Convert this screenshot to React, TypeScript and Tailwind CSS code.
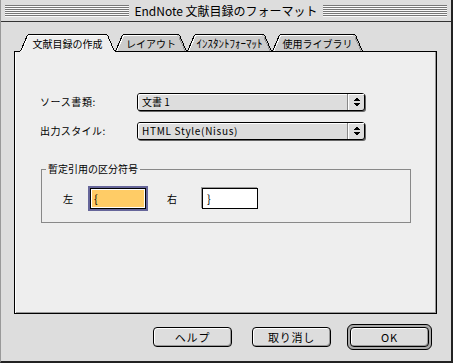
import React from "react";

function TabShape({ w, active }: { w: number; active: boolean }) {
  const fill = active ? "#eeeeee" : "#cccccc";
  const bottom = active ? 18 : 17;
  return (
    <svg className="absolute left-0 top-0" width={w} height={18} viewBox={`0 0 ${w} 18`}>
      <path
        d={`M0 ${bottom} L0 17 L6.8 1.6 Q7.5 0 9.5 0 L${w - 9.5} 0 Q${w - 7.5} 0 ${w - 6.8} 1.6 L${w} 17 L${w} ${bottom} Z`}
        fill={fill}
      />
      <path
        d={`M1.9 17 L8.1 2.6 Q8.6 1.5 9.8 1.5 L${w - 10} 1.5`}
        stroke="#ffffff"
        fill="none"
        shapeRendering="crispEdges"
      />
      {!active && (
        <path
          d={`M${w - 2} 17 L${w - 8.2} 2.6`}
          stroke="#999999"
          fill="none"
          shapeRendering="crispEdges"
        />
      )}
      <path
        d={`M0.5 17.5 L7.2 1.8 Q7.9 0.5 9.5 0.5 L${w - 9.5} 0.5 Q${w - 7.9} 0.5 ${w - 7.2} 1.8 L${w - 0.5} 17.5`}
        stroke="#000000"
        fill="none"
        shapeRendering="crispEdges"
      />
    </svg>
  );
}

function Arrows() {
  return (
    <svg width="7" height="10" viewBox="0 0 7 10" shapeRendering="crispEdges">
      <polygon points="3.5,0.5 7,4 0,4" fill="#000" />
      <polygon points="0,6 7,6 3.5,9.5" fill="#000" />
    </svg>
  );
}

function Dropdown({ text, latin }: { text: string; latin?: boolean }) {
  return (
    <div className="flex h-[18px] w-[228px] rounded-[3px] border border-black bg-[#dddddd] shadow-[1px_1px_0_#666666]">
      <div
        className={`flex flex-1 items-center rounded-l-[2px] pl-[4px] text-[10px] leading-none shadow-[inset_1px_1px_0_#ffffff] ${latin ? "tracking-[0.7px]" : ""}`}
      >
        {text}
      </div>
      <div className="flex w-[17px] items-center justify-center border-l border-l-[#888888] shadow-[inset_1px_1px_0_#ffffff]">
        <Arrows />
      </div>
    </div>
  );
}

function Button({ label, className }: { label: string; className: string }) {
  return (
    <div
      className={`flex h-[20px] w-[79px] items-center justify-center rounded-[4px] border border-black bg-[#dddddd] text-[11px] leading-none tracking-[0.8px] shadow-[inset_1px_1px_0_#ffffff,inset_-1px_-1px_0_#999999] ${className}`}
    >
      {label}
    </div>
  );
}

export default function App() {
  return (
    <div className="flex h-[363px] w-[453px] flex-col border-b-2 border-l border-r-2 border-b-[#222222] border-l-[#999999] border-r-[#222222] bg-[#dddddd] font-['Noto_Sans_CJK_JP',sans-serif] text-black">
      {/* Title bar */}
      <div className="flex h-[22px] items-center gap-[5px] border-b border-b-[#333333] px-[4px]">
        <div className="h-[12px] flex-1 bg-[repeating-linear-gradient(to_bottom,#777777_0px,#777777_1px,#fafafa_1px,#fafafa_2px)]" />
        <div className="text-[12px] leading-none">EndNote 文献目録のフォーマット</div>
        <div className="h-[12px] flex-1 bg-[repeating-linear-gradient(to_bottom,#777777_0px,#777777_1px,#fafafa_1px,#fafafa_2px)]" />
      </div>

      {/* Body */}
      <div className="flex flex-1 flex-col pl-[13px] pr-[14px] pt-[12px]">
        {/* Tabs */}
        <div className="relative z-10 ml-[6px] flex h-[18px]">
          <div className="relative flex h-[18px] w-[95px] items-center justify-center pt-[1px]">
            <TabShape w={95} active={true} />
            <span className="relative text-[10px] leading-none">文献目録の作成</span>
          </div>
          <div className="relative flex h-[18px] w-[72px] items-center justify-center pt-[1px]">
            <TabShape w={72} active={false} />
            <span className="relative text-[10px] leading-none">レイアウト</span>
          </div>
          <div className="relative flex h-[18px] w-[85px] items-center justify-center pt-[1px]">
            <TabShape w={85} active={false} />
            <span className="relative text-[11px] leading-none">ｲﾝｽﾀﾝﾄﾌｫｰﾏｯﾄ</span>
          </div>
          <div className="relative flex h-[18px] w-[91px] items-center justify-center pt-[1px]">
            <TabShape w={91} active={false} />
            <span className="relative text-[10px] leading-none">使用ライブラリ</span>
          </div>
        </div>

        {/* Panel */}
        <div className="-mt-px flex h-[263px] w-[423px] flex-col border border-black bg-[#eeeeee] pl-[25px] pt-[41px] shadow-[inset_1px_0_0_#ffffff,inset_-1px_-1px_0_#999999]">
          <div className="flex h-[18px] items-center">
            <div className="w-[97px] text-[10px] leading-none tracking-[0.6px]">ソース書類:</div>
            <Dropdown text="文書 1" />
          </div>
          <div className="mt-[11px] flex h-[18px] items-center">
            <div className="w-[97px] text-[10px] leading-none tracking-[0.4px]">出力スタイル:</div>
            <Dropdown text="HTML Style(Nisus)" latin={true} />
          </div>

          {/* Group box */}
          <div className="relative ml-[1px] mt-[29px] h-[54px] w-[370px] border border-[#888888] pl-[21px] pt-[16px]">
            <span className="absolute left-[4px] top-[-7px] bg-[#eeeeee] px-[2px] text-[10px] leading-[12px]">
              暫定引用の区分符号
            </span>
            <div className="flex h-[25px] items-center">
              <span className="text-[10px] leading-none">左</span>
              <div className="ml-[15px] border-2 border-[#66669a]">
                <div className="flex h-[21px] w-[56px] border border-black bg-white p-[1px]">
                  <div className="flex flex-1 items-center bg-[#ffcc66] pl-[2px] text-[11px] leading-none">{"{"}</div>
                </div>
              </div>
              <span className="ml-[19px] text-[10px] leading-none">右</span>
              <div className="ml-[25px] flex h-[21px] w-[56px] items-center border border-black bg-white pl-[4px] text-[11px] leading-none shadow-[-1px_-1px_0_#999999]">
                {"}"}
              </div>
            </div>
          </div>
        </div>

        {/* Buttons */}
        <div className="mt-[10px] flex h-[26px] items-center justify-end pr-[5px]">
          <Button label="ヘルプ" className="mr-[20px]" />
          <Button label="取り消し" className="mr-[16px]" />
          <div className="rounded-[6px] border border-black bg-[#aaaaaa] p-[2px]">
            <Button label="OK" className="" />
          </div>
        </div>
      </div>
    </div>
  );
}
